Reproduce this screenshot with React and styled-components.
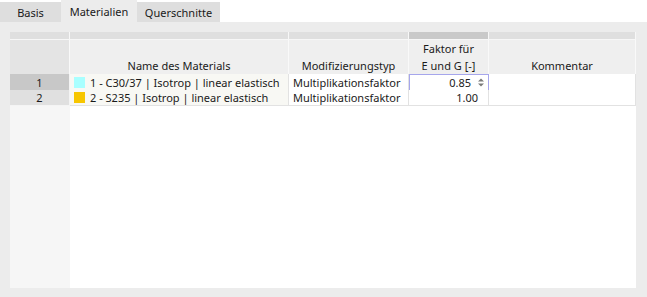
import styled, { createGlobalStyle } from "styled-components";

const GlobalStyle = createGlobalStyle`
  body {
    margin: 0;
    background: #ffffff;
    font-family: "Noto Sans", "Open Sans", sans-serif;
    font-size: 11px;
    color: #1a1a1a;
  }
`;

const cols = "60px 219px 120px 80px 147px";

const TabBar = styled.div`
  display: flex;
  align-items: flex-end;
  height: 22px;
  background: #ffffff;
`;

const Tab = styled.div`
  width: ${(p) => p.$width}px;
  height: ${(p) => (p.$active ? 22 : 20)}px;
  display: flex;
  align-items: center;
  justify-content: center;
  background: ${(p) => (p.$active ? "#ececec" : "#dedede")};
  color: #1a1a1a;
`;

const Panel = styled.div`
  background: #ececec;
  height: 275px;
  padding: 10px 11px 9px 10px;
  box-sizing: border-box;
`;

const Sheet = styled.div`
  display: flex;
  flex-direction: column;
  height: 100%;
  background: #ffffff;
`;

const Row = styled.div`
  display: grid;
  grid-template-columns: ${cols};
  height: ${(p) => p.$h}px;
`;

const BandCell = styled.div`
  background: ${(p) => (p.$sel ? "#c9c9c9" : "#dfdfdf")};
  border-right: 1px solid #f7f7f7;
  border-bottom: 1px solid #f7f7f7;
`;

const HeadCell = styled.div`
  background: ${(p) => (p.$corner ? "#e4e4e4" : "#efefef")};
  border-right: 1px solid #f9f9f9;
  border-bottom: 1px solid #d8d8d8;
  display: flex;
  flex-direction: column;
  justify-content: flex-end;
  align-items: center;
  line-height: 17px;
  padding-bottom: 0;
  text-align: center;
`;

const NumCell = styled.div`
  background: ${(p) => (p.$sel ? "#c8c8c8" : "#e0e0e0")};
  border-bottom: 1px solid #f4f4f4;
  border-right: 1px solid #f4f4f4;
  display: flex;
  align-items: center;
  justify-content: center;
`;

const Cell = styled.div`
  background: ${(p) => p.$bg || "#ffffff"};
  border-right: 1px solid #e2e2e2;
  border-bottom: 1px solid #e2e2e2;
  display: flex;
  align-items: center;
  justify-content: ${(p) => (p.$right ? "flex-end" : "flex-start")};
  padding: 0 ${(p) => (p.$right ? 10 : 4)}px 0 4px;
  white-space: nowrap;
  overflow: hidden;
`;

const EditCell = styled.div`
  border: 1px solid #a6a6ec;
  display: flex;
  align-items: center;
  justify-content: flex-end;
  gap: 7px;
  padding-right: 4px;
  background: #ffffff;
`;

const Swatch = styled.span`
  width: 11px;
  height: 11px;
  background: ${(p) => p.$color};
  margin-right: 5px;
  flex: none;
`;

const Spinner = () => (
  <svg width="6" height="9" viewBox="0 0 6 9">
    <path d="M0 3.5 L3 0.5 L6 3.5 Z" fill="#7a7a7a" />
    <path d="M0 5.5 L3 8.5 L6 5.5 Z" fill="#7a7a7a" />
  </svg>
);

const Filler = styled.div`
  flex: 1;
  display: grid;
  grid-template-columns: 60px 1fr;
`;

const FillerHead = styled.div`
  background: #f6f6f6;
`;

const materials = [
  { no: 1, color: "#a9ffff", name: "1 - C30/37 | Isotrop | linear elastisch", type: "Multiplikationsfaktor", factor: "0.85", sel: true },
  { no: 2, color: "#f7c600", name: "2 - S235 | Isotrop | linear elastisch", type: "Multiplikationsfaktor", factor: "1.00" },
];

export default function App() {
  return (
    <>
      <GlobalStyle />
      <TabBar>
        <Tab $width={61}>Basis</Tab>
        <Tab $width={76} $active>Materialien</Tab>
        <Tab $width={83}>Querschnitte</Tab>
      </TabBar>
      <Panel>
        <Sheet>
          <Row $h={8}>
            <BandCell />
            <BandCell />
            <BandCell />
            <BandCell $sel />
            <BandCell />
          </Row>
          <Row $h={34}>
            <HeadCell $corner />
            <HeadCell>Name des Materials</HeadCell>
            <HeadCell>Modifizierungstyp</HeadCell>
            <HeadCell>
              <span>Faktor für</span>
              <span>E und G [-]</span>
            </HeadCell>
            <HeadCell>Kommentar</HeadCell>
          </Row>
          {materials.map((m) => (
            <Row $h={16} key={m.no}>
              <NumCell $sel={m.sel}>{m.no}</NumCell>
              <Cell $bg="#f8f8f4">
                <Swatch $color={m.color} />
                {m.name}
              </Cell>
              <Cell>{m.type}</Cell>
              {m.sel ? (
                <EditCell>
                  {m.factor}
                  <Spinner />
                </EditCell>
              ) : (
                <Cell $right>{m.factor}</Cell>
              )}
              <Cell />
            </Row>
          ))}
          <Filler>
            <FillerHead />
          </Filler>
        </Sheet>
      </Panel>
    </>
  );
}
